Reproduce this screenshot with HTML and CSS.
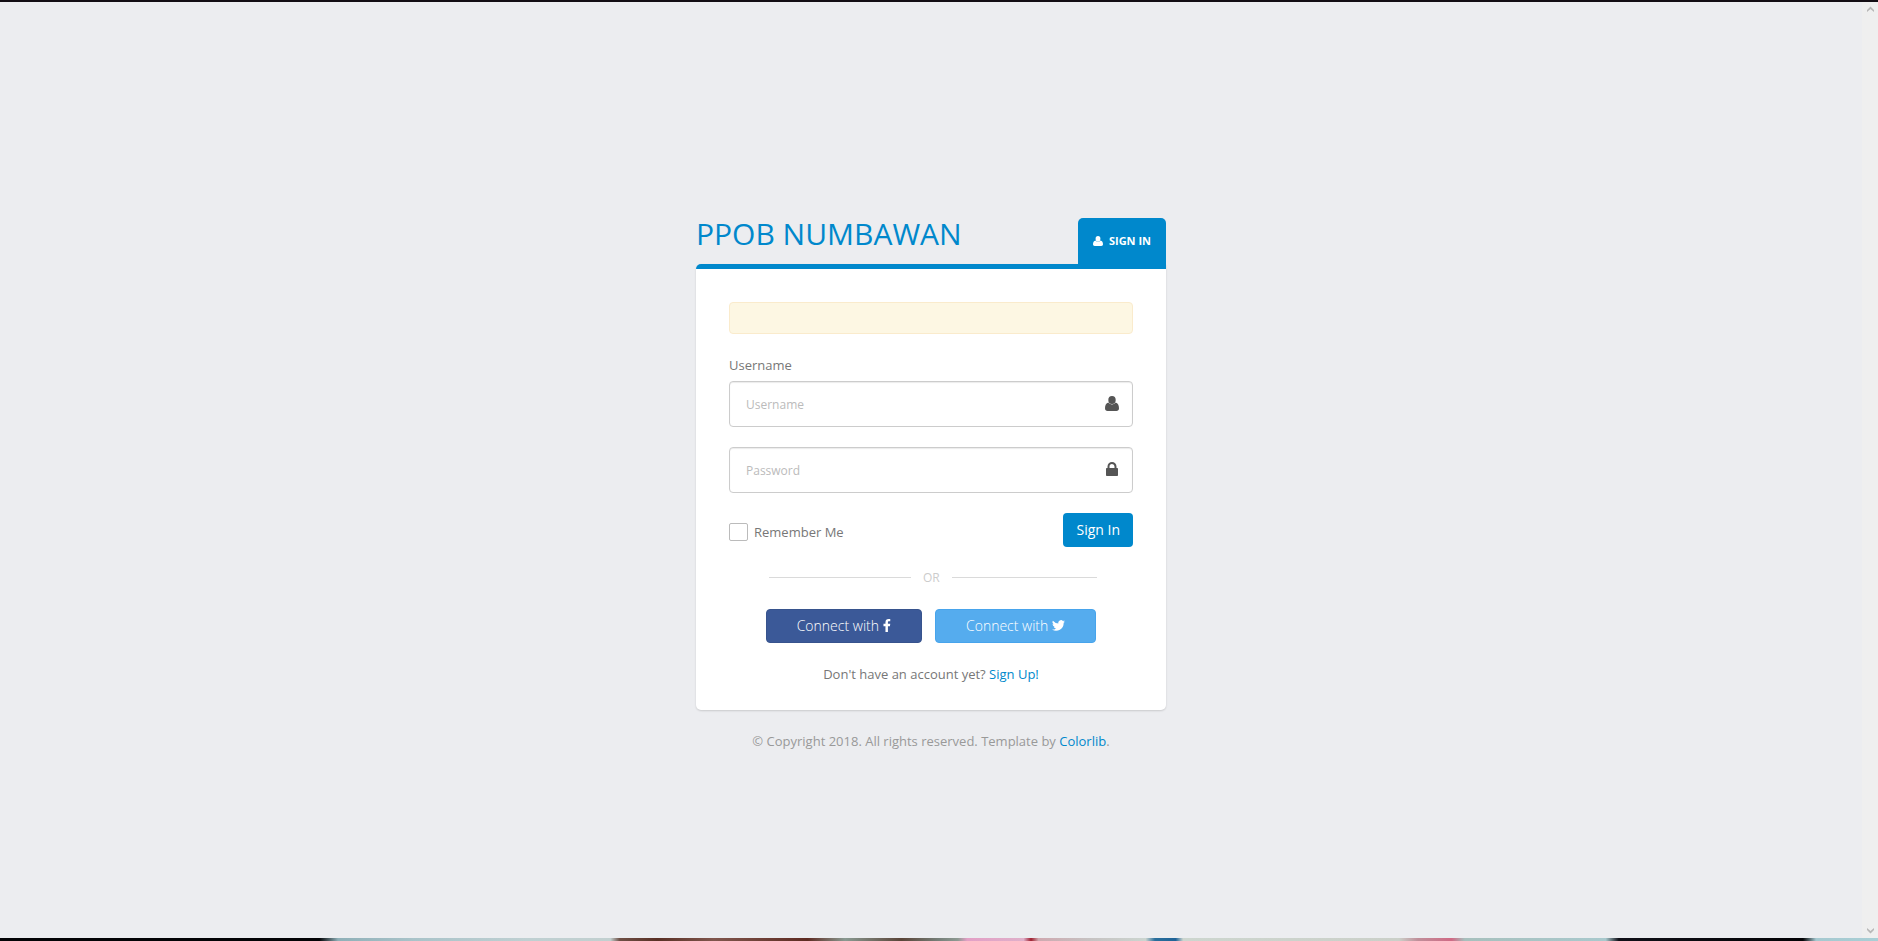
FILE: index.html
```html
<!DOCTYPE html>
<html lang="en">
<head>
<meta charset="utf-8">
<title>PPOB NUMBAWAN</title>
<link rel="stylesheet" href="styles.css">
</head>
<body>
<div class="screen">
  <main class="page">
    <section class="sign">
      <header class="sign-head">
        <h1 class="brand">PPOB NUMBAWAN</h1>
        <h2 class="tab">
          <svg class="tab-icon" viewBox="0 0 14 14" aria-hidden="true"><ellipse cx="7" cy="4" rx="3.4" ry="4"/><path d="M3.6 6.2C1 6.5 0 9 0 11.600C0 13 1 14 2.400 14h9.200C13 14 14 13 14 11.600C14 9 13 6.500 10.400 6.200C9 8.800 5 8.800 3.600 6.200z"/></svg>
          SIGN IN
        </h2>
      </header>
      <form class="card">
        <div class="alert"></div>
        <label class="label" for="user">Username</label>
        <div class="field">
          <input class="input" id="user" type="text" placeholder="Username">
          <svg class="field-icon" viewBox="0 0 14 15" aria-hidden="true"><ellipse cx="7" cy="4" rx="3.700" ry="4"/><path d="M3.400 6.600C1 7 0 9.500 0 12.200C0 14 1 15 2.600 15h8.800C13 15 14 14 14 12.200C14 9.500 13 7 10.600 6.600C9 9 5 9 3.400 6.600z"/></svg>
        </div>
        <div class="field">
          <input class="input" type="password" placeholder="Password" aria-label="Password">
          <svg class="field-icon" viewBox="0 0 14 15" aria-hidden="true"><path fill-rule="evenodd" d="M2.500 6V4.500a4.500 4.500 0 0 1 9 0V6h.7q.8 0 .8.800v6.400q0 .8-.8.8H1.800q-.8 0-.8-.8V6.800Q1 6 1.800 6zM4.500 6h5V4.500a2.500 2.500 0 0 0-5 0z"/></svg>
        </div>
        <div class="actions">
          <div class="remember">
            <input class="check" id="remember" type="checkbox">
            <label for="remember">Remember Me</label>
          </div>
          <button class="btn btn-primary" type="submit">Sign In</button>
        </div>
        <div class="divider"><span>OR</span></div>
        <div class="social">
          <a class="btn btn-facebook" href="#">Connect with
            <svg class="icon-f" viewBox="0 0 8 14" aria-hidden="true"><path d="M7.500.1v2.300H6.200C5.200 2.400 5 2.900 5 3.600v1.600h2.500l-.350 2.500H5V14H2.350V7.700H.2V5.200h2.150V3.400C2.350 1.200 3.700 0 5.600 0c.9 0 1.700.05 1.900.1z"/></svg>
          </a>
          <a class="btn btn-twitter" href="#">Connect with
            <svg class="icon-t" viewBox="0 0 24 20" aria-hidden="true"><path d="M24 2.400a10 10 0 0 1-2.800.8A5 5 0 0 0 23.300.500a10 10 0 0 1-3.100 1.200 4.900 4.900 0 0 0-8.400 4.500A14 14 0 0 1 1.700 1a4.900 4.900 0 0 0 1.500 6.600A5 5 0 0 1 1 7a4.900 4.900 0 0 0 3.900 4.900 5 5 0 0 1-2.200.1 4.900 4.900 0 0 0 4.600 3.400A9.900 9.900 0 0 1 0 17.500 14 14 0 0 0 21.500 5a10 10 0 0 0 2.500-2.600z"/></svg>
          </a>
        </div>
        <p class="signup">Don't have an account yet? <a href="#">Sign Up!</a></p>
      </form>
      <p class="copyright">© Copyright 2018. All rights reserved. Template by <a href="#">Colorlib</a>.</p>
    </section>
  </main>
  <div class="scrollbar" aria-hidden="true">
    <svg class="chevron" viewBox="0 0 7 6"><path d="M0 4L3.500.500 7 4v2L3.500 3 0 6z"/></svg>
    <svg class="chevron" viewBox="0 0 7 6"><path d="M0 2L3.500 5.500 7 2V0L3.500 3 0 0z"/></svg>
  </div>
</div>
<div class="desktop"></div>
</body>
</html>
```

FILE: styles.css
```css
* {
  box-sizing: border-box;
}

body {
  margin: 0;
  min-height: 100vh;
  display: flex;
  flex-direction: column;
  border-top: 2px solid #130d14;
  background: #ecedf0;
  color: #777;
  font: 13px/22px "Open Sans", Arial, sans-serif;
}

a {
  color: #0088cc;
  text-decoration: none;
}

.screen {
  flex: 1;
  display: flex;
}

.page {
  flex: 1;
  display: flex;
  align-items: center;
  justify-content: center;
  padding-top: 29px;
}

.sign {
  width: 100%;
  max-width: 470px;
}

.sign-head {
  display: flex;
  justify-content: space-between;
}

.brand {
  margin: 0;
  color: #0088cc;
  font-size: 30px;
  font-weight: 400;
  line-height: 32px;
}

.tab {
  display: flex;
  align-items: center;
  gap: 6px;
  margin: 0;
  padding: 12px 15px;
  border-radius: 5px 5px 0 0;
  background: #0088cc;
  color: #fff;
  font-size: 11px;
  font-weight: 700;
  line-height: 22px;
}

.tab-icon {
  width: 10px;
  height: 10px;
  fill: currentColor;
}

.card {
  padding: 33px 33px 25px;
  border-top: 5px solid #0088cc;
  border-radius: 5px 0 5px 5px;
  background: #fff;
  box-shadow: 0 1px 2px rgba(0, 0, 0, 0.15);
}

.alert {
  height: 32px;
  margin-bottom: 20px;
  border: 1px solid #faebcc;
  border-radius: 4px;
  background: #fdf7e3;
}

.label {
  display: block;
  margin-bottom: 5px;
}

.field {
  position: relative;
  margin-bottom: 20px;
}

.input {
  display: block;
  width: 100%;
  height: 46px;
  padding: 1px 48px 0 16px;
  border: 1px solid #ccc;
  border-radius: 4px;
  background: #fff;
  box-shadow: inset 0 1px 1px rgba(0, 0, 0, 0.08);
  color: #555;
  font: inherit;
  font-size: 12px;
}

.input::placeholder {
  color: #bbb;
  opacity: 1;
}

.field-icon {
  position: absolute;
  top: 15px;
  right: 14px;
  width: 14px;
  height: 15px;
  fill: #555;
}

.actions {
  display: flex;
  justify-content: space-between;
  margin-bottom: 21px;
}

.remember {
  display: flex;
  align-items: center;
  gap: 6px;
  padding-top: 4px;
}

.check {
  appearance: none;
  width: 19px;
  height: 18px;
  margin: 0;
  border: 1px solid #bbb;
  border-radius: 2px;
  background: #fff;
}

.btn {
  display: flex;
  align-items: center;
  justify-content: center;
  gap: 4px;
  height: 34px;
  padding: 0 12px;
  border: 1px solid transparent;
  border-radius: 4px;
  color: #fff;
  font: inherit;
  font-size: 14px;
}

.btn-primary {
  background: #0088cc;
}

.divider {
  display: flex;
  align-items: center;
  gap: 12px;
  margin: 0 36px 21px 40px;
  color: #ccc;
  font-size: 12px;
  line-height: 20px;
}

.divider::before,
.divider::after {
  content: "";
  width: 142px;
  height: 1px;
  background: #dadada;
}

.divider::after {
  flex: 1;
}

.social {
  display: flex;
  justify-content: center;
  gap: 13px;
  margin-bottom: 20px;
}

.social .btn {
  padding: 0 30px;
  font-weight: 300;
}

.btn-facebook {
  border-color: #37538d;
  background: #3b5998;
}

.btn-twitter {
  border-color: #47a4ec;
  background: #55acee;
}

.icon-f {
  width: 8px;
  height: 13px;
  fill: currentColor;
}

.icon-t {
  width: 13px;
  height: 11px;
  fill: currentColor;
}

.signup {
  margin: 0;
  text-align: center;
}

.copyright {
  margin: 20px 0 0;
  color: #999;
  text-align: center;
}

.scrollbar {
  width: 16px;
  display: flex;
  flex-direction: column;
  align-items: center;
  justify-content: space-between;
  padding: 4px 0;
  background: #efefef;
}

.chevron {
  width: 7px;
  height: 6px;
  fill: #b8b8b8;
}

.desktop {
  height: 3px;
  background: linear-gradient(90deg,
    #030306 0 17%, #8fb0b8 18%, #a9c3c9 22%, #bfd0d2 28%, #c2d0d0 32.500%,
    #6e4f45 33%, #593025 35%, #80564d 38%, #5e2b22 43%, #8a9a92 45%, #5a4438 48%, #77807a 50%,
    #8d9a92 51%, #e3a0c6 51.500%, #dfb0ca 54.500%, #a02030 54.900%, #cfa9b0 55.300%, #c6c2c2 58%,
    #ccd5d0 61%, #2a6f9c 61.500%, #1f6397 62.600%, #cdd6cf 63%, #cbd0c9 74.500%,
    #c08f9a 75.500%, #d06a85 77.300%, #a7c0bd 78%, #a9c9cd 85.500%, #101018 86.200%,
    #030306 96%, #a6c9d0 96.700%, #a9cfd6 100%);
}
```
